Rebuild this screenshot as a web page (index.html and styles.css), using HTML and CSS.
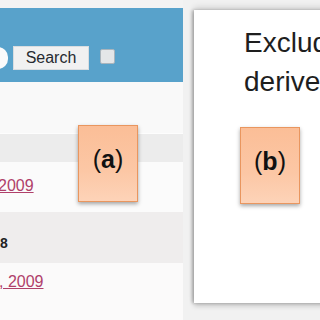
FILE: index.html
```html
<!DOCTYPE html>
<html>
<head>
<meta charset="utf-8">
<link rel="stylesheet" href="styles.css">
</head>
<body>
<div class="page">
  <div class="left">
    <div class="topstrip"></div>
    <div class="header">
      <span class="pill"></span>
      <button class="search">Search</button>
      <span class="check"></span>
    </div>
    <div class="row row0"></div>
    <div class="row row1"></div>
    <div class="row row2"><a class="link l1">2009</a></div>
    <div class="row row3"><span class="num">8</span></div>
    <div class="row row4"><a class="link l2">, 2009</a></div>
  </div>
  <div class="right">
    <div class="panel">
      <div class="slide-text">Excluded<br>derived</div>
    </div>
  </div>
  <div class="badge badge-a"><span class="paren">(</span>a<span class="paren">)</span></div>
  <div class="badge badge-b"><span class="paren">(</span>b<span class="paren">)</span></div>
</div>
</body>
</html>
```
FILE: styles.css
```css
html, body {
  margin: 0;
  padding: 0;
  width: 320px;
  height: 320px;
  overflow: hidden;
  background: #f2f2f2;
  font-family: "Liberation Sans", Arial, sans-serif;
}
.page {
  position: relative;
  display: flex;
  width: 320px;
  height: 320px;
  overflow: hidden;
}
.left {
  width: 183px;
  flex-shrink: 0;
  display: flex;
  flex-direction: column;
  background: #fafafa;
  overflow: hidden;
}
.topstrip {
  height: 8px;
  background: #f3f3f3;
}
.header {
  box-sizing: border-box;
  height: 74px;
  padding-top: 38px;
  background: #58a2cb;
  display: flex;
  align-items: flex-start;
}
.pill {
  width: 20px;
  height: 22px;
  margin-top: 1px;
  margin-left: -12px;
  border-radius: 11px;
  background: #fbfbfb;
  flex-shrink: 0;
}
.search {
  margin: 0 0 0 5px;
  width: 76px;
  height: 24px;
  padding: 0;
  border: 1px solid #d9dde0;
  background: #f1f1f1;
  font-family: "Liberation Sans", Arial, sans-serif;
  font-size: 16px;
  color: #262a30;
  line-height: 22px;
}
.check {
  width: 13px;
  height: 13px;
  margin-top: 3px;
  margin-left: 11px;
  border: 1px solid #a9b4bc;
  background: #e4e6e8;
  border-radius: 2px;
}
.row {
  box-sizing: border-box;
  white-space: nowrap;
}
.row0 { height: 51px; background: #f9f9f9; }
.row1 { height: 29px; background: #ececec; border-top: 1px solid #fdfdfd; }
.row2 { height: 50px; background: #fbfbfb; padding-top: 15px; }
.row3 { height: 51px; background: #efeded; padding-top: 22px; }
.row4 { flex: 1; background: #fbfafa; padding-top: 10px; }
.link {
  font-size: 16px;
  line-height: 18px;
  color: #b0406a;
  text-decoration: underline;
  display: inline-block;
}
.l1 { margin-left: -2px; }
.l2 { margin-left: -1px; }
.num {
  font-size: 14px;
  line-height: 16px;
  color: #222;
  font-weight: bold;
  display: inline-block;
}
.right {
  flex: 1;
  padding: 10px 0 17px 11px;
  background: #f1f1f1;
  display: flex;
}
.panel {
  flex: 1;
  background: #ffffff;
  box-shadow: -2px 0 3px rgba(0,0,0,0.22), 0 3px 5px rgba(0,0,0,0.18), 0 -3px 6px rgba(0,0,0,0.12);
  padding: 13px 0 0 50px;
  overflow: hidden;
}
.slide-text {
  font-size: 28px;
  line-height: 39px;
  color: #1e1e1e;
  white-space: nowrap;
}
.badge {
  position: absolute;
  box-sizing: border-box;
  width: 60px;
  height: 77px;
  padding-bottom: 8px;
  border: 1px solid #e9965f;
  background: linear-gradient(#fbbe97, #fcc7a5 60%, #fdd3b8);
  box-shadow: 0 2px 4px rgba(0,0,0,0.35);
  display: flex;
  align-items: center;
  justify-content: center;
  font-size: 25px;
  font-weight: bold;
  color: #111;
}
.paren { font-weight: normal; }
.badge-a { left: 78px; top: 125px; }
.badge-b { left: 240px; top: 127px; }
```
